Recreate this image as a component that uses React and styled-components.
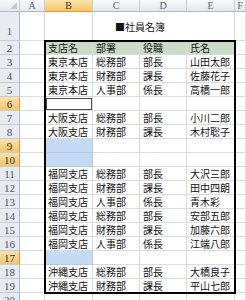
import React from 'react'
import styled, { createGlobalStyle, css } from 'styled-components'

const GlobalStyle = createGlobalStyle`
  html, body {
    margin: 0;
    padding: 0;
    background: #fff;
    overflow: hidden;
  }
`

const COLUMNS = ['A', 'B', 'C', 'D', 'E', 'F']
const HEADER = ['支店名', '部署', '役職', '氏名']

const DATA = {
  3: ['東京本店', '総務部', '部長', '山田太郎'],
  4: ['東京本店', '財務部', '課長', '佐藤花子'],
  5: ['東京本店', '人事部', '係長', '高橋一郎'],
  7: ['大阪支店', '総務部', '部長', '小川二郎'],
  8: ['大阪支店', '財務部', '課長', '木村聡子'],
  11: ['福岡支店', '総務部', '部長', '大沢三郎'],
  12: ['福岡支店', '財務部', '課長', '田中四朗'],
  13: ['福岡支店', '人事部', '係長', '青木彩'],
  14: ['福岡支店', '総務部', '部長', '安部五郎'],
  15: ['福岡支店', '財務部', '課長', '加藤六郎'],
  16: ['福岡支店', '人事部', '係長', '江端八郎'],
  18: ['沖縄支店', '総務部', '部長', '大橋良子'],
  19: ['沖縄支店', '財務部', '課長', '平山七郎'],
}

const MARKED_ROWS = [6, 9, 10, 17]
const ACTIVE_ROW = 6
const SELECTED_ROWS = [9, 10, 17]

const GRID = '#d9dbde'
const HEAD_LINE = '#c5ccd6'

const Sheet = styled.div`
  display: grid;
  grid-template-columns: 20px 25px 48px 47px 47px 48px 1fr;
  grid-template-rows: 12px 29px repeat(19, 14px);
  width: 246px;
  height: 300px;
  overflow: hidden;
  font-family: "Noto Sans CJK JP", "Noto Sans", sans-serif;
  font-size: 10px;
  color: #111;
`

const markedHead = css`
  background: linear-gradient(#fae3ad, #f4c667);
  color: #3a3226;
`

const Corner = styled.div`
  box-sizing: border-box;
  display: flex;
  align-items: flex-end;
  justify-content: flex-end;
  padding: 0 2px 2px 0;
  background: linear-gradient(#f6f7f9, #e6e9ee);
  border-right: 1px solid ${HEAD_LINE};
  border-bottom: 1px solid #a9b8c9;
`

const ColHead = styled.div`
  box-sizing: border-box;
  display: flex;
  align-items: center;
  justify-content: center;
  font-family: "Liberation Serif", serif;
  font-size: 10px;
  color: #5a6677;
  background: linear-gradient(#f8f9fa, #e5e8ec);
  border-right: 1px solid ${HEAD_LINE};
  border-bottom: 1px solid #a9b8c9;
  ${p => p.$marked && css`
    ${markedHead}
    border-bottom-color: #f29436;
  `}
`

const RowHead = styled.div`
  box-sizing: border-box;
  display: flex;
  align-items: ${p => (p.$tall ? 'flex-end' : 'center')};
  justify-content: center;
  padding-bottom: ${p => (p.$tall ? '3px' : '0')};
  font-family: "Liberation Serif", serif;
  font-size: 11px;
  color: #4c596b;
  background: #e8ebf0;
  border-right: 1px solid #a9b8c9;
  border-bottom: 1px solid ${HEAD_LINE};
  ${p => p.$marked && css`
    ${markedHead}
    border-right-color: #f29436;
  `}
`

const Cell = styled.div`
  box-sizing: border-box;
  display: flex;
  align-items: center;
  padding-left: 3px;
  white-space: nowrap;
  overflow: hidden;
  line-height: 1;
  background: #fff;
  border-right: 1px solid ${GRID};
  border-bottom: 1px solid ${GRID};
  ${p => p.$head && css`
    background: #c9dcc5;
  `}
  ${p => p.$selected && css`
    background: #c4dbf5;
    border-color: #b3cbe8;
  `}
  ${p => p.$active && css`
    outline: 1px solid #4a4a4a;
    outline-offset: -2px;
  `}
`

const Title = styled.div`
  grid-column: span 2;
  box-sizing: border-box;
  display: flex;
  align-items: center;
  justify-content: center;
  padding-top: 1px;
  white-space: nowrap;
  border-bottom: 1px solid ${GRID};
`

const Table = styled.div`
  grid-column: span 4;
  grid-row: span 18;
  display: grid;
  grid-template-columns: 48px 47px 47px 48px;
  grid-template-rows: repeat(18, 14px);
  outline: 2px solid #000;
  outline-offset: -1px;
  position: relative;
  z-index: 1;
`

const CornerMark = () => (
  <svg width="7" height="7" viewBox="0 0 7 7">
    <polygon points="7,0 7,7 0,7" fill="#c3c9d1" />
  </svg>
)

function TableRows() {
  const cells = []
  HEADER.forEach(text => cells.push(<Cell key={`h-${text}`} $head>{text}</Cell>))
  for (let r = 3; r <= 19; r++) {
    const values = DATA[r] || ['', '', '', '']
    values.forEach((text, i) => {
      cells.push(
        <Cell
          key={`${r}-${i}`}
          $selected={i === 0 && SELECTED_ROWS.includes(r)}
          $active={i === 0 && r === ACTIVE_ROW}
        >
          {text}
        </Cell>
      )
    })
  }
  return cells
}

export default function App() {
  const sideRows = []
  for (let r = 3; r <= 19; r++) {
    sideRows.push(
      <React.Fragment key={r}>
        <RowHead $marked={MARKED_ROWS.includes(r)}>{r}</RowHead>
        <Cell />
        <Cell />
      </React.Fragment>
    )
  }

  return (
    <>
      <GlobalStyle />
      <Sheet>
        <Corner><CornerMark /></Corner>
        {COLUMNS.map(c => (
          <ColHead key={c} $marked={c === 'B'}>{c}</ColHead>
        ))}

        <RowHead $tall>1</RowHead>
        <Cell />
        <Cell />
        <Title>■社員名簿</Title>
        <Cell />
        <Cell />

        <RowHead>2</RowHead>
        <Cell />
        <Table><TableRows /></Table>
        <Cell />
        {sideRows}

        <RowHead>20</RowHead>
        <Cell />
        <Cell />
        <Cell />
        <Cell />
        <Cell />
        <Cell />
      </Sheet>
    </>
  )
}
